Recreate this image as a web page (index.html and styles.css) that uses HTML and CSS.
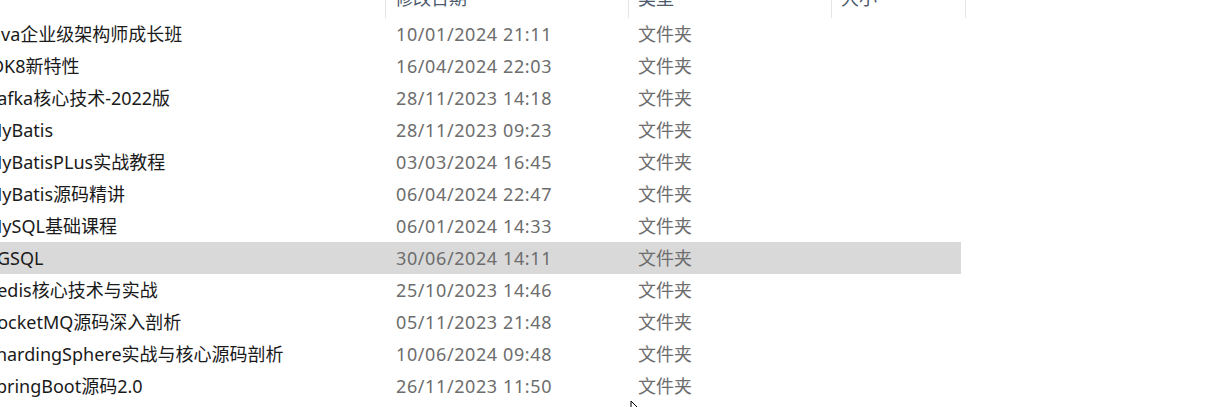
FILE: index.html
```html
<!DOCTYPE html>
<html lang="zh-CN">
<head>
<meta charset="utf-8">
<title>文件列表</title>
<link rel="stylesheet" href="styles.css">
</head>
<body>
<div class="view">
  <div class="header">
    <div class="hcell hname"></div>
    <div class="hcell"><span>修改日期</span></div>
    <div class="hcell"><span>类型</span></div>
    <div class="hcell hlast"><span>大小</span></div>
  </div>
  <div class="rows">
    <div class="row"><div class="name">Java企业级架构师成长班</div><div class="date">10/01/2024 21:11</div><div class="type">文件夹</div><div></div></div>
    <div class="row"><div class="name">JDK8新特性</div><div class="date">16/04/2024 22:03</div><div class="type">文件夹</div><div></div></div>
    <div class="row"><div class="name">Kafka核心技术-2022版</div><div class="date">28/11/2023 14:18</div><div class="type">文件夹</div><div></div></div>
    <div class="row"><div class="name">MyBatis</div><div class="date">28/11/2023 09:23</div><div class="type">文件夹</div><div></div></div>
    <div class="row"><div class="name">MyBatisPLus实战教程</div><div class="date">03/03/2024 16:45</div><div class="type">文件夹</div><div></div></div>
    <div class="row"><div class="name">MyBatis源码精讲</div><div class="date">06/04/2024 22:47</div><div class="type">文件夹</div><div></div></div>
    <div class="row"><div class="name">MySQL基础课程</div><div class="date">06/01/2024 14:33</div><div class="type">文件夹</div><div></div></div>
    <div class="row hover"><div class="name">PGSQL</div><div class="date">30/06/2024 14:11</div><div class="type">文件夹</div><div></div></div>
    <div class="row"><div class="name">Redis核心技术与实战</div><div class="date">25/10/2023 14:46</div><div class="type">文件夹</div><div></div></div>
    <div class="row"><div class="name">RocketMQ源码深入剖析</div><div class="date">05/11/2023 21:48</div><div class="type">文件夹</div><div></div></div>
    <div class="row"><div class="name">ShardingSphere实战与核心源码剖析</div><div class="date">10/06/2024 09:48</div><div class="type">文件夹</div><div></div></div>
    <div class="row"><div class="name">SpringBoot源码2.0</div><div class="date">26/11/2023 11:50</div><div class="type">文件夹</div><div></div></div>
  </div>
</div>
<svg class="cursor" width="14" height="20" viewBox="0 0 14 20"><path d="M1 1 L1 16 L4.5 12.5 L7 18 L9 17 L6.5 11.5 L11.5 11.5 Z" fill="#fff" stroke="#000" stroke-width="1"/></svg>
</body>
</html>
```

FILE: styles.css
```css
html, body {
  margin: 0;
  padding: 0;
  background: #ffffff;
  overflow: hidden;
}
body {
  width: 1223px;
  height: 407px;
  position: relative;
  font-family: "Noto Sans", "Noto Sans CJK SC", sans-serif;
  font-size: 18px;
}
.view {
  margin-left: -14px;
  width: 1000px;
}
.header {
  display: grid;
  grid-template-columns: 399px 243px 203px 135px;
  height: 18px;
  overflow: hidden;
}
.hcell {
  border-left: 1px solid #e5e5e5;
  padding-left: 9px;
  color: #4d5b6e;
  line-height: 32px;
  overflow: hidden;
}
.hcell span {
  display: block;
  margin-top: -18px;
}
.hname {
  border-left: none;
}
.hlast {
  border-right: 1px solid #e5e5e5;
}
.row {
  display: grid;
  grid-template-columns: 399px 243px 203px 130px;
  width: 975px;
  height: 32px;
  line-height: 32px;
  white-space: nowrap;
}
.row.hover {
  background: #d9d9d9;
}
.name {
  color: #1a1a1a;
  overflow: hidden;
}
.date {
  color: #6d6d6d;
  padding-left: 11px;
  letter-spacing: 0.6px;
}
.type {
  color: #6d6d6d;
  padding-left: 10px;
}
.cursor {
  position: absolute;
  left: 630px;
  top: 400px;
}
```
